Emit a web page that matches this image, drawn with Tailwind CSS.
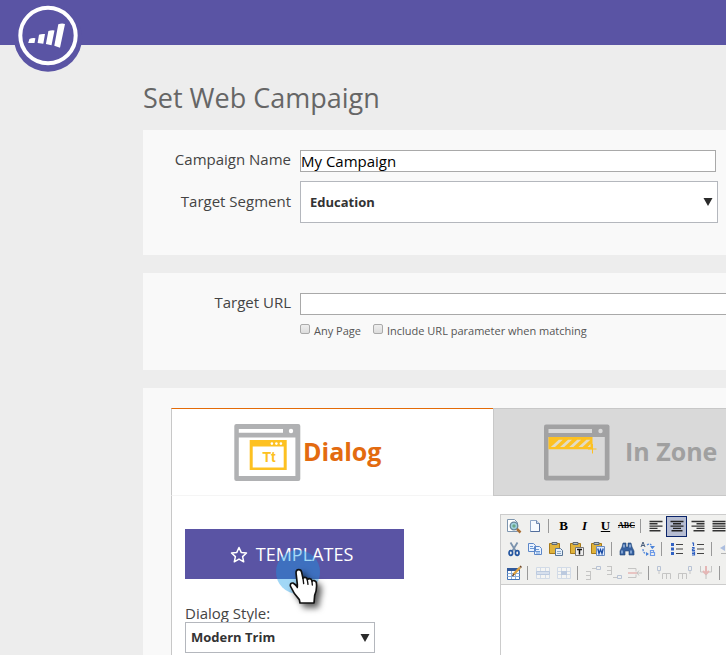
<!DOCTYPE html>
<html lang="en">
<head>
<meta charset="utf-8">
<meta name="viewport" content="width=device-width, initial-scale=1">
<title>Set Web Campaign</title>
<script src="https://cdn.jsdelivr.net/npm/@tailwindcss/browser@4"></script>
</head>
<body class="flex min-h-screen flex-col overflow-x-hidden bg-[#ededed] font-['Open_Sans',sans-serif] text-[#444]">
<header class="relative h-[45px] shrink-0 bg-[#5a54a4]">
  <a href="#" aria-label="Home" class="absolute top-0 left-3 block">
    <svg width="72" height="72" viewBox="0 0 72 72">
      <circle cx="36" cy="37.500" r="34.200" fill="#5a54a4"/>
      <circle cx="36" cy="35.500" r="27.700" fill="none" stroke="#fff" stroke-width="4"/>
      <path fill="#fff" d="M16.200 43l1.200-4.100Q20 37.800 23.400 38.200L22.500 43zM25.600 43l1.400-8.300Q29.500 33.600 33 34L31.300 43.700zM33.900 44l2.500-12.900Q39 30 42.500 30.400L39.500 45.300zM42.300 45.700l4-21.500Q49.500 23.200 53 23.900L48 47.800z"/>
    </svg>
  </a>
</header>

<main class="flex flex-1 flex-col gap-[18px] pt-8 pl-[143px]">
  <h1 class="-mb-[2px] h-[37px] shrink-0 text-[27px] leading-[42px] text-[#666]">Set Web Campaign</h1>

  <section class="grid shrink-0 grid-cols-[148px_1fr] items-start gap-x-[9px] gap-y-[9px] bg-[#f9f9f9] pt-5 pb-8">
    <label for="name" class="text-right text-[15px] leading-[18px]">Campaign Name</label>
    <input id="name" value="My Campaign" class="mr-[10px] h-[22px] border border-[#a9a9a9] bg-white text-[15px] leading-5 text-black">
    <label for="segment" class="text-right text-[15px] leading-10">Target Segment</label>
    <div class="relative mr-2">
      <select id="segment" class="block h-[42px] w-full appearance-none border border-[#b4b7bd] bg-white px-[9px] pt-[2px] text-[13px] font-bold text-[#333]"><option>Education</option></select>
      <svg class="pointer-events-none absolute top-[17px] right-[5px]" width="10" height="8" viewBox="0 0 10 8"><path d="M.5 0h9L5 8z" fill="#2b2b2b"/></svg>
    </div>
  </section>

  <section class="grid shrink-0 grid-cols-[148px_1fr] items-start gap-x-[9px] gap-y-2 bg-[#f9f9f9] pt-5 pb-[31px]">
    <label for="url" class="text-right text-[15px] leading-[18px]">Target URL</label>
    <input id="url" class="h-[22px] border border-r-0 border-[#a9a9a9] bg-white text-[15px]">
    <div class="col-start-2 flex h-4 gap-3 text-[11px] leading-4 text-[#555]">
      <label class="flex gap-1"><input type="checkbox" class="mt-[1px] size-[10px] appearance-none rounded-[2px] border border-[#aaa] bg-linear-to-b from-[#eee] to-[#ddd]">Any Page</label>
      <label class="flex gap-1"><input type="checkbox" class="mt-[1px] size-[10px] appearance-none rounded-[2px] border border-[#aaa] bg-linear-to-b from-[#eee] to-[#ddd]">Include URL parameter when matching</label>
    </div>
  </section>

  <section class="flex flex-1 flex-col bg-[#f9f9f9] pt-5 pl-7">
    <nav class="flex h-[88px] shrink-0">
      <button class="flex w-[322px] shrink-0 items-center gap-[2px] border-t border-b border-l border-t-[#e36b08] border-b-[#f5f5f5] border-l-[#c8c8c8] bg-white pl-[62px] text-[25px] font-bold text-[#e36b10]">
        <svg width="67" height="57" viewBox="0 0 67 57">
          <rect x=".3" width="66" height="57" rx="2" fill="#b0b1b3"/>
          <path fill="#fff" d="M4.800 5H49v3.700H4.800zM4.800 13.500h56.600V52H4.800z"/><circle cx="57" cy="7" r="2.200" fill="#fff"/>
          <path fill="#fdc121" fill-rule="evenodd" d="M15.700 16h37v30h-37zM18.700 22.500v21h31v-21z"/>
          <g fill="#fff"><circle cx="37.900" cy="19.600" r="1.300"/><circle cx="42.400" cy="19.600" r="1.300"/><circle cx="46.900" cy="19.600" r="1.300"/></g>
          <text x="35" y="38" text-anchor="middle" font-family="Liberation Sans" font-weight="bold" font-size="14" fill="#fdc121">Tt</text>
        </svg>
        Dialog
      </button>
      <button class="flex flex-1 items-center gap-[15px] border-t border-b border-l border-[#c8c8c8] bg-[#d9d9d9] pl-[50px] text-[25px] font-bold whitespace-nowrap text-[#a0a0a0]">
        <svg class="shrink-0" width="66" height="57" viewBox="0 0 66 57">
          <rect y=".5" width="65.500" height="56" rx="2" fill="#a2a2a3"/>
          <path fill="#d9d9d9" d="M4.500 5H48v4H4.500zM4.500 13h56.300v38.700H4.500z"/><circle cx="56.500" cy="7" r="2.200" fill="#d9d9d9"/>
          <path fill="#fdc121" d="M4.500 13H48.500v12.300h-44z"/>
          <path fill="#e3dcc4" d="M6.800 23l8-7.300h4L11 23zM16 23l8-7.300h4L20.200 23zM25.200 23l8-7.300h4L29.400 23zM34.400 23l8-7.300h4L38.600 23zM43.500 23l3-3v3z"/>
          <path stroke="#fdc121" d="M48.500 20v9.500M44 25h8.500"/>
        </svg>
        In Zone
      </button>
    </nav>

    <div class="flex flex-1 gap-24 border-l border-[#c8c8c8] bg-white pl-[13px]">
      <div class="flex w-[219px] shrink-0 flex-col pt-[33px]">
        <div class="relative">
          <button class="flex h-[50px] w-full items-center justify-center gap-2 bg-[#5a54a4] pr-[6px] text-[18px] text-white">
            <svg width="18" height="17" viewBox="0 0 18 17"><path d="M9 1.500l2.200 4.900 5.300.6-3.900 3.600 1.100 5.200L9 13.100l-4.700 2.700 1.100-5.200L1.500 7l5.300-.6z" fill="none" stroke="#fff" stroke-width="1.500" stroke-linejoin="round"/></svg>
            TEMPLATES
          </button>
          <div class="pointer-events-none absolute top-[21px] left-[91px] size-[44px] rounded-full bg-[#159be8]/40"></div>
          <svg class="pointer-events-none absolute top-[38px] left-[102px] overflow-visible drop-shadow-[4px_4px_3px_rgba(0,0,0,0.65)]" width="40" height="40" viewBox="0 0 120 120">
            <path fill="#fff" stroke="#111" stroke-width="5" stroke-linejoin="round" d="M31 52L27 17Q27 8 35 8Q43 8 44 16L48 34Q52 29 59 33L61 38Q66 32 73 37L75 43Q82 37 88 46Q91 66 83 85L81 108H39L37 98Q20 80 10 57Q9 47 18 48Q24 51 31 60Z"/>
            <path fill="none" stroke="#111" stroke-width="4" stroke-linecap="round" d="M48 34l2 16M61 39l2 13M75 44l1 10M31 52v10"/>
          </svg>
        </div>
        <label for="style" class="mt-[25px] text-[15px] leading-[18px]">Dialog Style:</label>
        <div class="relative w-[190px]">
          <select id="style" class="block h-[31px] w-full appearance-none border border-[#b4b7bd] bg-white px-[5px] text-[13px] font-bold text-[#333]"><option>Modern Trim</option></select>
          <svg class="pointer-events-none absolute top-3 right-[5px]" width="10" height="8" viewBox="0 0 10 8"><path d="M.5 0h9L5 8z" fill="#2b2b2b"/></svg>
        </div>
      </div>

      <div class="mt-[18px] flex min-w-0 flex-1 flex-col overflow-hidden border-t border-l border-[#ccc]">
        <div role="toolbar" aria-label="Editor" class="flex flex-col border-b border-[#ccc] bg-[#f0f0ee] pl-[2px] [&_button]:flex [&_button]:h-[21px] [&_button]:w-[21px] [&_button]:shrink-0 [&_button]:items-center [&_button]:justify-center [&_hr]:mx-[3px] [&_hr]:h-[14px] [&_hr]:w-[2px] [&_hr]:shrink-0 [&_hr]:border-0 [&_hr]:border-l [&_hr]:border-[#999] [&_svg]:size-4">
          <div class="flex h-[22px] items-center">
            <button aria-label="Preview"><svg viewBox="0 0 16 16"><path fill="#fff" stroke="#7d95ae" d="M1.500 1.500h7l3 3v9h-10z"/><circle cx="8" cy="8" r="3.800" fill="#9ed0dc" stroke="#668499" stroke-width="1.300"/><path d="M6 8l2-2 2 2-2 2z" fill="#69a884"/><path d="M11 11l3.500 3.500" stroke="#a96f35" stroke-width="2.500"/></svg></button>
            <button aria-label="New page"><svg viewBox="0 0 16 16"><path fill="#f7fbff" stroke="#8ea6c7" d="M3.500 2.500h6l3 3v8h-9z"/><path d="M12.500 5.500v8h-9" fill="none" stroke="#536e9b"/><path fill="#cad8eb" stroke="#7089b0" d="M9.500 2.500v3h3"/></svg></button>
            <hr>
            <button aria-label="Bold" class="font-['Liberation_Serif',serif] text-[13px] font-bold text-black">B</button>
            <button aria-label="Italic" class="font-['Liberation_Serif',serif] text-[13px] font-bold text-black italic">I</button>
            <button aria-label="Underline" class="font-['Liberation_Serif',serif] text-[13px] font-bold text-black underline">U</button>
            <button aria-label="Strikethrough" class="font-['Liberation_Serif',serif] text-[8px] font-bold text-black line-through">ABC</button>
            <hr>
            <button aria-label="Align left"><svg viewBox="0 0 16 16"><path stroke="#333" stroke-width="1.400" d="M1.500 3.500h13M1.500 5.800h8M1.500 8.100h13M1.500 10.400h8M1.500 12.700h11"/></svg></button>
            <button aria-label="Align center" class="border border-[#0a246a] bg-[#b6bdd2]"><svg viewBox="0 0 16 16"><path stroke="#222" stroke-width="1.400" d="M1.500 3.500h13M4 5.800h8M1.500 8.100h13M4 10.400h8M2.500 12.700h11"/></svg></button>
            <button aria-label="Align right"><svg viewBox="0 0 16 16"><path stroke="#333" stroke-width="1.400" d="M1.500 3.500h13M6.500 5.800h8M1.500 8.100h13M6.500 10.400h8M3.500 12.700h11"/></svg></button>
            <button aria-label="Justify"><svg viewBox="0 0 16 16"><path stroke="#333" stroke-width="1.400" d="M1.500 3.500h13M1.500 5.800h13M1.500 8.100h13M1.500 10.400h13M1.500 12.700h13"/></svg></button>
          </div>
          <div class="flex h-6 items-center">
            <button aria-label="Cut"><svg viewBox="0 0 16 16" fill="none"><path stroke="#7b93ad" stroke-width="1.800" d="M4.500 1.500l5.500 9M11.500 1.500L6 10.500"/><ellipse cx="4.800" cy="12" rx="1.800" ry="2.300" stroke="#2556a0" stroke-width="1.700"/><ellipse cx="11.200" cy="12" rx="1.800" ry="2.300" stroke="#2556a0" stroke-width="1.700"/></svg></button>
            <button aria-label="Copy"><svg viewBox="0 0 16 16"><path fill="#eaf3ff" stroke="#5c87c8" d="M1.500 2.500h5l2 2v6h-7zM7.500 5.500h5l2 2v6h-7z"/><path stroke="#6d9ad6" d="M3 5.500h3M3 7.500h4M9 8.500h3M9 10.500h4M9 12h4"/></svg></button>
            <button aria-label="Paste"><svg viewBox="0 0 16 16"><path fill="#e0b33b" stroke="#a87a19" d="M1.500 2.500h10v10h-10z"/><path fill="#b8c3cc" stroke="#5e6872" d="M4 1.500h5v2H4z"/><path fill="#e5f0fb" stroke="#577394" d="M7.500 7.500h5l2 2v5h-7z"/><path stroke="#8ca8c7" d="M9 10.500h4M9 12.500h4"/></svg></button>
            <button aria-label="Paste as text"><svg viewBox="0 0 16 16"><path fill="#e0b33b" stroke="#a87a19" d="M1.500 2.500h10v10h-10z"/><path fill="#b8c3cc" stroke="#5e6872" d="M4 1.500h5v2H4z"/><path fill="#eee" stroke="#777" d="M6.500 6.500h8v8h-8z"/><path stroke="#111" stroke-width="1.500" d="M8 8.500h5M10.500 8.500v5"/></svg></button>
            <button aria-label="Paste from Word"><svg viewBox="0 0 16 16"><path fill="#e0b33b" stroke="#a87a19" d="M1.500 2.500h10v10h-10z"/><path fill="#b8c3cc" stroke="#5e6872" d="M4 1.500h5v2H4z"/><path fill="#dfeaff" stroke="#6a8cc0" d="M6.500 5.500h8v9h-8z"/><path fill="none" stroke="#1b4da5" stroke-width="1.300" d="M7.800 7.500l1.200 5 1.500-4 1.500 4 1.200-5"/></svg></button>
            <hr>
            <button aria-label="Find"><svg viewBox="0 0 16 16"><path fill="#355f9e" stroke="#244675" stroke-width=".6" d="M4 2h3v4h2V2h3l1 4 2 4v4h-5v-4H6v4H1v-4l2-4z"/><path stroke="#b3d1f5" stroke-width="1.200" d="M5 3.500v3M11 3.500v3M3 9.500v3M12 9.500v3"/></svg></button>
            <button aria-label="Replace"><svg viewBox="0 0 16 16" fill="none"><path stroke="#4b5f7c" d="M1 6l2-5 2 5M2 4.500h2"/><path stroke="#4b83d9" stroke-width="1.200" stroke-dasharray="2 1" d="M3 8q0 5 5 5M7 4q5-3 5 4"/><path fill="#4b83d9" d="M6 11l3 2-3 2zM10 5h5l-2.500 3z"/><path stroke="#6e9be8" stroke-width="1.200" d="M10.500 9.500h3v2h-3zM10.500 11.500h4v3h-4z"/></svg></button>
            <hr>
            <button aria-label="Bulleted list"><svg viewBox="0 0 16 16"><path fill="#3162c4" d="M2 2h3v3H2zM2 6.500h3v3H2zM2 11h3v3H2z"/><path stroke="#444" stroke-width="1.200" d="M7 3.500h7M7 8h7M7 12.500h7"/></svg></button>
            <button aria-label="Numbered list"><svg viewBox="0 0 16 16"><path stroke="#3162c4" stroke-width="1.200" fill="none" d="M2 2h1.500v3M2 6.500h2v1.500H2.500v1.500H5M2 11h2.500v3H2M2 12.500h2"/><path stroke="#444" stroke-width="1.200" d="M7 3.500h7M7 8h7M7 12.500h7"/></svg></button>
            <hr>
            <button aria-label="Outdent" class="opacity-35"><svg viewBox="0 0 16 16"><path stroke="#444" d="M8 3.500h6M8 6.500h6M8 9.500h6M2 12.500h12"/><path fill="#3162c4" d="M6 4v6L1 7z"/></svg></button>
          </div>
          <div class="flex h-[23px] items-center">
            <button aria-label="Insert table"><svg viewBox="0 0 16 16"><path fill="#fff" stroke="#4374b8" d="M1.500 3.500h12v11h-12z"/><path fill="#31599a" d="M1 3h13v3H1z"/><path stroke="#8dafd9" d="M1.500 8.500h12M1.500 11.500h12M5.500 6v8M9.500 6v8"/><path stroke="#dda13f" stroke-width="2.500" d="M7.500 9.500L14 2.500"/><path stroke="#6e4727" stroke-width="1.500" d="M6.500 11l1.500-2M14 1l1.500 1.500"/></svg></button>
            <hr>
            <button disabled aria-label="Row properties" class="opacity-35"><svg viewBox="0 0 16 16"><path fill="#fff" stroke="#9db6dc" d="M1.500 2.500h13v11h-13zM5.500 2.500v11M10.500 2.500v11"/><path fill="#aac4ec" stroke="#5e86c6" d="M1.500 6.500h13v3h-13z"/></svg></button>
            <button disabled aria-label="Cell properties" class="opacity-35"><svg viewBox="0 0 16 16"><path fill="#fff" stroke="#9db6dc" d="M1.500 2.500h13v11h-13zM5.500 2.500v11M10.500 2.500v11M1.500 6.500h13M1.500 9.500h13"/><path fill="#5e86c6" d="M5 6h6v4H5z"/></svg></button>
            <hr>
            <button disabled aria-label="Insert row before" class="opacity-30"><svg viewBox="0 0 16 16" fill="none"><path stroke="#666" d="M1 6.500h5M1 10.500h5M1 14.500h5M5.500 6v9M7 3.500h4"/><path stroke="#395f9c" d="M11.500 1.500h4v3h-4z"/></svg></button>
            <button disabled aria-label="Insert row after" class="opacity-30"><svg viewBox="0 0 16 16" fill="none"><path stroke="#666" d="M1 1.500h5M1 5.500h5M1 9.500h5M5.500 1v9M7 12.500h4"/><path stroke="#395f9c" d="M11.500 10.500h4v3h-4z"/></svg></button>
            <button disabled aria-label="Delete row" class="opacity-30"><svg viewBox="0 0 16 16" fill="none"><path stroke="#666" d="M1 3.500h8v3M1 12.500h8v-3"/><path stroke="#c33" stroke-width="1.500" d="M1 8h9"/><path stroke="#555" d="M10 8h5M12 5.500L10 8l2 2.500"/></svg></button>
            <hr>
            <button disabled aria-label="Insert column before" class="opacity-30"><svg viewBox="0 0 16 16" fill="none"><path stroke="#395f9c" d="M1.500 1.500h3v4h-3z"/><path stroke="#666" d="M3 6v3M6.500 14V8.500h8V14M10.500 8v6"/></svg></button>
            <button disabled aria-label="Insert column after" class="opacity-30"><svg viewBox="0 0 16 16" fill="none"><path stroke="#395f9c" d="M11.500 1.500h3v4h-3z"/><path stroke="#666" d="M13 6v3M1.500 14V8.500h8V14M5.500 8v6"/></svg></button>
            <button disabled aria-label="Delete column" class="opacity-30"><svg viewBox="0 0 16 16" fill="none"><path stroke="#666" d="M2.500 1v6h3M13.500 1v6h-3"/><path stroke="#c33" stroke-width="2" d="M8 1v8M5 6l3 3 3-3"/><path stroke="#555" d="M8 9v5"/></svg></button>
            <hr>
          </div>
        </div>
        <div contenteditable="true" role="textbox" aria-label="Dialog content" class="flex-1 bg-white"></div>
      </div>
    </div>
  </section>
</main>
</body>
</html>
